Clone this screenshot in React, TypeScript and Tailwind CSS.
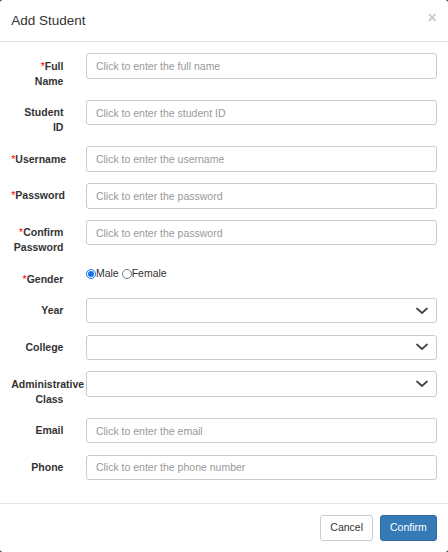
import React from "react";

const font = { fontFamily: '"Liberation Sans", Arial, Helvetica, sans-serif' };

function Chevron() {
  return (
    <svg width="12" height="8" viewBox="0 0 12 8" className="absolute right-[8px] top-1/2 -translate-y-1/2">
      <path d="M1 1.5 L6 6 L11 1.5" fill="none" stroke="#444" strokeWidth="1.7" strokeLinecap="round" strokeLinejoin="round" />
    </svg>
  );
}

function Row({
  label,
  required,
  children,
}: {
  label: React.ReactNode;
  required?: boolean;
  children: React.ReactNode;
}) {
  return (
    <div className="flex mb-[11.25px]">
      <div className="w-[74.67px] shrink-0 pl-[11.25px] pr-[11.25px] pt-[5.25px] text-right text-[10.5px] leading-[15px] font-bold text-[#333]">
        {required && <span className="text-[#ff0000] font-normal">*</span>}
        {label}
      </div>
      <div className="flex-1 pl-[11.25px] pr-[11.25px]">{children}</div>
    </div>
  );
}

function TextInput({ placeholder }: { placeholder: string }) {
  return (
    <input
      type="text"
      placeholder={placeholder}
      style={font}
      className="block w-full h-[25.5px] px-[9px] border border-[#ccc] rounded-[3px] text-[10.5px] text-[#555] placeholder:text-[#999] bg-white outline-none"
    />
  );
}

function SelectBox() {
  return (
    <div className="relative w-full h-[25.5px] border border-[#ccc] rounded-[3px] bg-white">
      <Chevron />
    </div>
  );
}

export default function App() {
  return (
    <div style={font} className="w-[448px] h-[552px] bg-[#5c2626]">
      <div className="w-[448px] h-[552px] bg-white rounded-[3px] flex flex-col text-[#333]">
        <div className="flex items-start justify-between px-[11.25px] pt-[11.25px] pb-[10.5px] border-b border-[#e5e5e5]">
          <div className="text-[13.5px] leading-[19.3px] text-[#333]">Add Student</div>
          <div className="text-[15.75px] leading-none font-bold text-black opacity-20 mt-[-1px]">×</div>
        </div>
        <div className="py-[11.25px] flex-1">
          <Row label={<>Full<br />Name</>} required>
            <TextInput placeholder="Click to enter the full name" />
          </Row>
          <Row label={<>Student<br />ID</>}>
            <TextInput placeholder="Click to enter the student ID" />
          </Row>
          <Row label="Username" required>
            <TextInput placeholder="Click to enter the username" />
          </Row>
          <Row label="Password" required>
            <TextInput placeholder="Click to enter the password" />
          </Row>
          <Row label={<>Confirm<br />Password</>} required>
            <TextInput placeholder="Click to enter the password" />
          </Row>
          <Row label="Gender" required>
            <div className="flex items-center text-[10.5px] leading-[15px] text-[#333]">
              <label className="flex items-center">
                <input type="radio" name="g" defaultChecked className="m-0 w-[10px] h-[10px] accent-[#1a73e8]" />
                <span>Male</span>
              </label>
              <label className="flex items-center ml-[3px]">
                <input type="radio" name="g" className="m-0 w-[10px] h-[10px]" />
                <span>Female</span>
              </label>
            </div>
          </Row>
          <Row label="Year">
            <SelectBox />
          </Row>
          <Row label="College">
            <SelectBox />
          </Row>
          <Row label={<>Administrative<br />Class</>}>
            <SelectBox />
          </Row>
          <Row label="Email">
            <TextInput placeholder="Click to enter the email" />
          </Row>
          <Row label="Phone">
            <TextInput placeholder="Click to enter the phone number" />
          </Row>
        </div>
        <div className="flex justify-end gap-[7px] px-[11.25px] py-[11.25px] border-t border-[#e5e5e5]">
          <button className="h-[25.5px] px-[9px] border border-[#ccc] rounded-[3px] bg-white text-[10.5px] text-[#333]">
            Cancel
          </button>
          <button className="h-[25.5px] px-[9px] border border-[#2e6da4] rounded-[3px] bg-[#337ab7] text-[10.5px] text-white">
            Confirm
          </button>
        </div>
      </div>
    </div>
  );
}
